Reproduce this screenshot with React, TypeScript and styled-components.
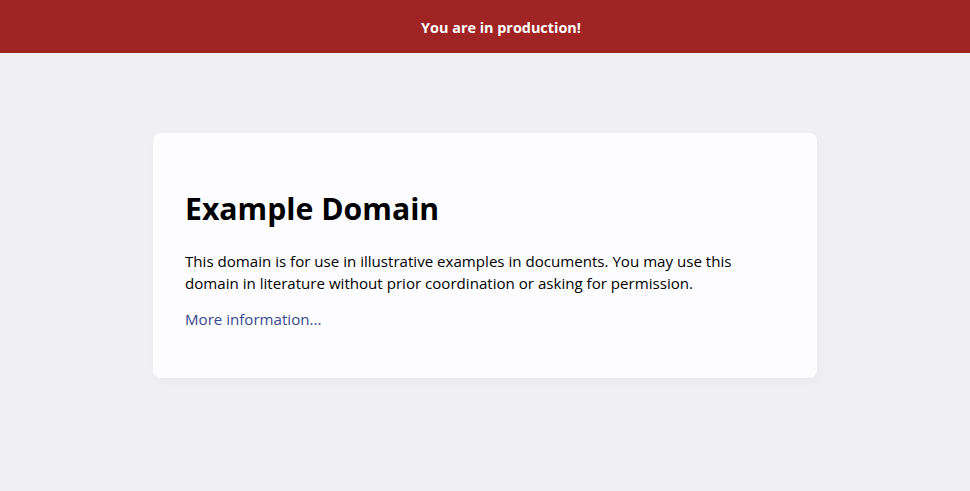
import React from "react";
import styled, { createGlobalStyle } from "styled-components";

const GlobalStyle = createGlobalStyle`
  html, body {
    margin: 0;
    padding: 0;
    background-color: #f0f0f2;
    font-family: "Open Sans", "Noto Sans", "Liberation Sans", sans-serif;
  }
`;

const Banner = styled.div`
  height: 53px;
  background-color: #a02424;
  color: #ffffff;
  display: flex;
  align-items: center;
  justify-content: center;
  font-size: 14.4px;
  font-weight: 700;
  padding: 1px 0 0 32px;
  box-sizing: border-box;
`;

const Card = styled.div`
  width: 600px;
  margin: 80px auto;
  padding: 32px;
  background-color: #fdfdff;
  border-radius: 8px;
  box-shadow: 2px 3px 7px 2px rgba(0, 0, 0, 0.02);
`;

const Title = styled.h1`
  font-size: 30.2px;
  font-weight: 700;
  line-height: 42.5px;
  margin: 21.44px 0;
  padding-top: 2px;
  height: 40.5px;
  color: #000;
`;

const Para = styled.p`
  font-size: 15.1px;
  line-height: 21.3px;
  margin: 16px 0 15px;
  padding-top: 1px;
  color: #000;
`;

const LinkPara = styled(Para)`
  padding-top: 0;
  margin-top: 15px;
  margin-bottom: 16px;
`;

const Link = styled.a`
  color: #38488f;
  text-decoration: none;
`;

export default function App() {
  return (
    <>
      <GlobalStyle />
      <Banner>You are in production!</Banner>
      <Card>
        <Title>Example Domain</Title>
        <Para>
          This domain is for use in illustrative examples in documents. You may use this
          domain in literature without prior coordination or asking for permission.
        </Para>
        <LinkPara>
          <Link href="#">More information...</Link>
        </LinkPara>
      </Card>
    </>
  );
}
